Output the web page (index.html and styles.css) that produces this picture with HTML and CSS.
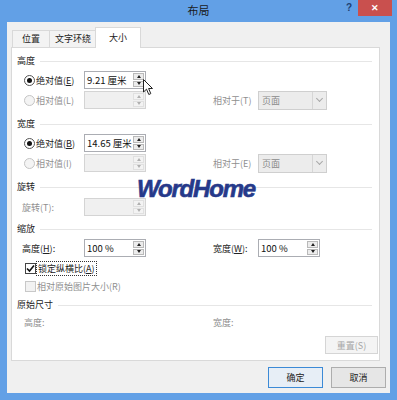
FILE: index.html
```html
<!DOCTYPE html>
<html lang="zh-CN">
<head>
    <meta charset="UTF-8">
    <meta name="viewport" content="width=device-width, initial-scale=1.0">
    <title>布局</title>
    <link rel="stylesheet" href="styles.css">
</head>
<body>
    <div class="window">
        <div class="titlebar">
            <span></span>
            <span class="title">布局</span>
            <div class="controls">
                <span class="help">?</span>
                <span class="close">✕</span>
            </div>
        </div>

        <div class="client">
            <div class="tabs">
                <div class="tab tab-pos">位置</div>
                <div class="tab tab-wrap">文字环绕</div>
                <div class="tab tab-size active">大小</div>
            </div>

            <div class="panel">
                <!-- 高度 -->
                <div class="heading first"><span>高度</span></div>
                <div class="row r-first">
                    <label class="opt"><span class="radio checked"></span>绝对值(<u>E</u>)</label>
                    <div class="spin"><span class="val">9.21 厘米</span><span class="btns"><i class="up"></i><i class="down"></i></span></div>
                </div>
                <div class="row disabled">
                    <label class="opt"><span class="radio"></span>相对值(L)</label>
                    <div class="spin"><span class="val"></span><span class="btns"><i class="up"></i><i class="down"></i></span></div>
                    <span class="rel">相对于(T)</span>
                    <div class="select"><span class="val">页面</span><span class="arrow"></span></div>
                </div>

                <!-- 宽度 -->
                <div class="heading h-width"><span>宽度</span></div>
                <div class="row r-first">
                    <label class="opt"><span class="radio checked"></span>绝对值(<u>B</u>)</label>
                    <div class="spin"><span class="val">14.65 厘米</span><span class="btns"><i class="up"></i><i class="down"></i></span></div>
                </div>
                <div class="row disabled">
                    <label class="opt"><span class="radio"></span>相对值(I)</label>
                    <div class="spin"><span class="val"></span><span class="btns"><i class="up"></i><i class="down"></i></span></div>
                    <span class="rel">相对于(E)</span>
                    <div class="select"><span class="val">页面</span><span class="arrow"></span></div>
                </div>

                <!-- 旋转 -->
                <div class="heading h-rotate"><span>旋转</span></div>
                <div class="row r-rotate disabled">
                    <label class="lbl">旋转(T):</label>
                    <div class="spin"><span class="val"></span><span class="btns"><i class="up"></i><i class="down"></i></span></div>
                </div>

                <!-- 缩放 -->
                <div class="heading h-scale"><span>缩放</span></div>
                <div class="row r-first">
                    <label class="lbl">高度(<u>H</u>):</label>
                    <div class="spin"><span class="val">100 %</span><span class="btns"><i class="up"></i><i class="down"></i></span></div>
                    <span class="rel">宽度(<u>W</u>):</span>
                    <div class="spin"><span class="val">100 %</span><span class="btns"><i class="up"></i><i class="down"></i></span></div>
                </div>
                <div class="check-row c-first">
                    <span class="checkbox checked">
                        <svg width="9" height="9" viewBox="0 0 9 9"><path d="M1 4.5 L3.5 7 L8 1.5" fill="none" stroke="#111" stroke-width="1.6"/></svg>
                    </span>
                    <span class="focus">锁定纵横比(<u>A</u>)</span>
                </div>
                <div class="check-row disabled">
                    <span class="checkbox"></span>
                    <span>相对原始图片大小(R)</span>
                </div>

                <!-- 原始尺寸 -->
                <div class="heading h-orig"><span>原始尺寸</span></div>
                <div class="row r-orig disabled">
                    <span class="orig-lbl">高度:</span>
                    <span class="orig-lbl right">宽度:</span>
                </div>
                <div class="reset-wrap">
                    <button class="btn reset" disabled>重置(S)</button>
                </div>
            </div>

            <div class="footer">
                <button class="btn primary">确定</button>
                <button class="btn">取消</button>
            </div>
        </div>

        <div class="watermark">WordHome</div>
        <svg class="cursor" width="11" height="17" viewBox="0 0 11 17">
            <path d="M0.5 0.5 L0.5 13 L3.5 10.2 L5.8 15.5 L7.8 14.6 L5.6 9.5 L9.5 9.5 Z" fill="#fff" stroke="#222" stroke-width="1"/>
        </svg>
    </div>
</body>
</html>
```

FILE: styles.css
```css
* {
    box-sizing: border-box;
}
body {
    margin: 0;
    padding: 0;
    font-family: "Noto Sans CJK SC", "Liberation Sans", sans-serif;
    font-size: 9px;
    color: #222;
}
u {
    text-decoration: underline;
}
.window {
    position: relative;
    width: 397px;
    height: 400px;
    background-color: #62a0e6;
    padding: 0 7px 7px 7px;
    display: flex;
    flex-direction: column;
}
.titlebar {
    height: 22px;
    display: grid;
    grid-template-columns: 1fr auto 1fr;
    align-items: start;
    margin: 0 -7px;
}
.title {
    font-size: 11px;
    line-height: 20px;
    color: #1a1a1a;
}
.controls {
    justify-self: end;
    display: flex;
    margin-right: 5px;
}
.help {
    width: 18px;
    height: 16px;
    line-height: 16px;
    text-align: center;
    font-family: "Liberation Sans", sans-serif;
    font-weight: bold;
    font-size: 10px;
    color: #1d3f73;
}
.close {
    width: 34px;
    height: 16px;
    line-height: 16px;
    background-color: #c9504e;
    color: #fff;
    text-align: center;
    font-size: 9px;
    font-weight: bold;
}

.client {
    flex: 1;
    background-color: #f0f0f0;
    padding: 5px 4px 5px 4px;
    display: flex;
    flex-direction: column;
}

/* tabs */
.tabs {
    display: flex;
    align-items: flex-end;
    height: 20px;
    padding-left: 1px;
}
.tab {
    height: 17px;
    line-height: 16px;
    text-align: center;
    background-color: #f3f3f3;
    border: 1px solid #d9d9d9;
    border-bottom: none;
}
.tab-pos {
    width: 38px;
}
.tab-wrap {
    width: 48px;
    margin-left: -1px;
}
.tab-size {
    width: 46px;
    margin-left: -2px;
}
.tab.active {
    height: 21px;
    line-height: 20px;
    background-color: #fff;
    margin-bottom: -1px;
    position: relative;
    z-index: 1;
}

/* panel */
.panel {
    width: 369px;
    background-color: #fff;
    border: 1px solid #d9d9d9;
    padding: 5px 0 6px 0;
    display: flex;
    flex-direction: column;
}
.heading {
    height: 16px;
    line-height: 16px;
    display: flex;
    align-items: center;
    padding-left: 5px;
    margin-right: 7px;
}
.heading::after {
    content: "";
    flex: 1;
    height: 1px;
    background-color: #e6e6e6;
    margin-left: 5px;
}
.h-width {
    margin-top: 6px;
}
.h-rotate {
    margin-top: 6px;
}
.h-scale {
    margin-top: 4px;
}
.h-orig {
    margin-top: 2px;
}

.row {
    height: 20px;
    display: flex;
    align-items: center;
    padding-left: 12px;
}
.r-first {
    margin-top: 1px;
}
.r-rotate {
    margin-top: 2px;
}
.row.r-first .lbl,
.r-rotate .lbl {
    margin-left: -2px;
    width: 62px;
}
.r-orig {
    height: 16px;
    margin-top: 1px;
}
.opt {
    width: 60px;
    display: flex;
    align-items: center;
}
.lbl {
    width: 60px;
}
.rel {
    width: 45px;
    margin-left: 67px;
}
.disabled {
    color: #8f8f8f;
}

.radio {
    width: 11px;
    height: 11px;
    border: 1px solid #555;
    border-radius: 50%;
    background-color: #fff;
    margin-right: 1px;
    display: flex;
    align-items: center;
    justify-content: center;
}
.radio.checked::after {
    content: "";
    width: 5px;
    height: 5px;
    border-radius: 50%;
    background-color: #111;
}
.disabled .radio {
    border-color: #c4c4c4;
    background-color: #f4f4f4;
}

/* spin box */
.spin {
    width: 62px;
    height: 18px;
    border: 1px solid #abadb3;
    background-color: #fff;
    display: flex;
    align-items: stretch;
}
.spin .val {
    flex: 1;
    padding-left: 2px;
    line-height: 16px;
    font-size: 9.5px;
    color: #111;
}
.spin .btns {
    width: 12px;
    display: flex;
    flex-direction: column;
    padding: 1px 1px 1px 0;
    gap: 1px;
}
.spin .btns i {
    flex: 1;
    background-color: #ececec;
    border: 1px solid #b9b9b9;
    display: flex;
    align-items: center;
    justify-content: center;
}
.spin .btns i::after {
    content: "";
    border-left: 2px solid transparent;
    border-right: 2px solid transparent;
}
.spin .up::after {
    border-bottom: 3px solid #222;
}
.spin .down::after {
    border-top: 3px solid #222;
}
.disabled .spin {
    border-color: #d4d4d4;
    background-color: #f0f0f0;
}
.disabled .spin .btns i {
    background-color: #f3f3f3;
    border-color: #e0e0e0;
}
.disabled .spin .up::after {
    border-bottom-color: #b0b0b0;
}
.disabled .spin .down::after {
    border-top-color: #b0b0b0;
}

/* drop-down */
.select {
    width: 69px;
    height: 19px;
    border: 1px solid #cfcfcf;
    background-color: #ececec;
    display: flex;
}
.select .val {
    flex: 1;
    padding-left: 3px;
    line-height: 17px;
    color: #8a8a8a;
}
.select .arrow {
    width: 14px;
    border-left: 1px solid #d6d6d6;
    display: flex;
    align-items: center;
    justify-content: center;
}
.select .arrow::after {
    content: "";
    width: 4px;
    height: 4px;
    border-right: 1px solid #a8a8a8;
    border-bottom: 1px solid #a8a8a8;
    transform: rotate(45deg);
    margin-top: -3px;
}

/* check boxes */
.check-row {
    height: 18px;
    display: flex;
    align-items: center;
    padding-left: 13px;
}
.c-first {
    margin-top: 1px;
}
.checkbox {
    width: 11px;
    height: 11px;
    border: 1px solid #444;
    background-color: #fff;
    margin-right: 1px;
    display: flex;
    align-items: center;
    justify-content: center;
}
.disabled .checkbox {
    border-color: #c8c8c8;
    background-color: #f2f2f2;
}
.focus {
    outline: 1px dotted #333;
    padding: 0 1px;
    line-height: 13px;
}

.orig-lbl {
    width: 40px;
}
.orig-lbl.right {
    margin-left: 149px;
}

.reset-wrap {
    display: flex;
    justify-content: flex-end;
    margin-top: 6px;
    padding-right: 1px;
}
.btn {
    font-family: "Noto Sans CJK SC", "Liberation Sans", sans-serif;
    font-size: 9px;
    color: #222;
    background-color: #e6e6e6;
    border: 1px solid #adadad;
    padding: 0;
    width: 55px;
    height: 21px;
}
.btn.reset {
    width: 53px;
    height: 18px;
    color: #a6a6a6;
    background-color: #f4f4f4;
    border-color: #d5d5d5;
}
.btn.primary {
    border-color: #3c8ad6;
    background-color: #e7eef6;
}

.footer {
    margin-top: auto;
    display: flex;
    justify-content: flex-end;
    gap: 8px;
}

.watermark {
    position: absolute;
    left: 137px;
    top: 177px;
    font-family: "Liberation Sans", sans-serif;
    font-size: 24px;
    line-height: 24px;
    font-weight: bold;
    font-style: italic;
    letter-spacing: -1.2px;
    color: #26398a;
    -webkit-text-stroke: 0.6px #26398a;
}
.cursor {
    position: absolute;
    left: 143px;
    top: 79px;
}
```
